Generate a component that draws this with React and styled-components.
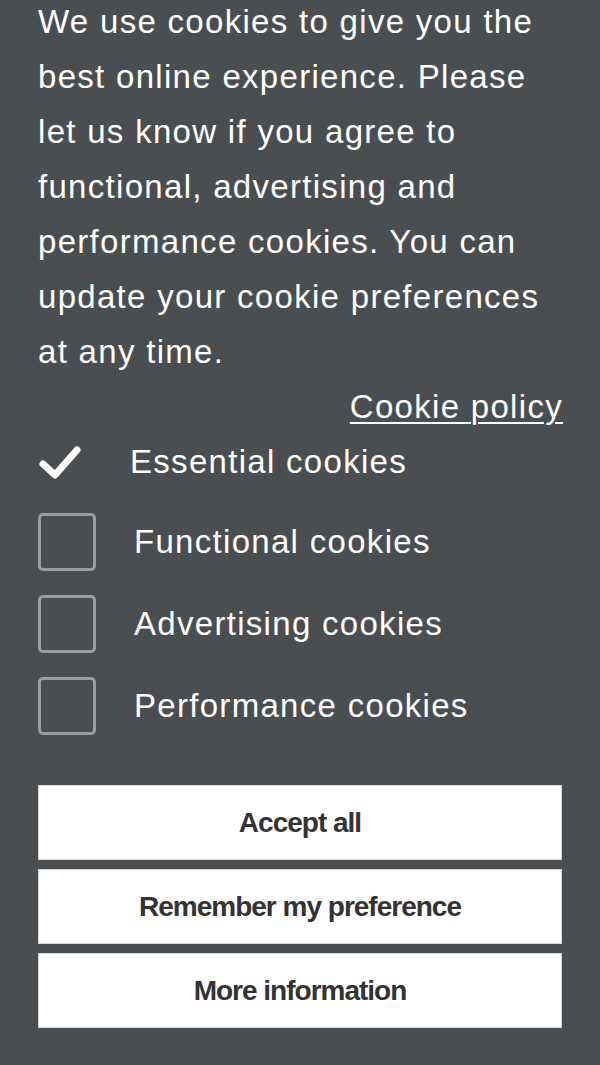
import React from 'react'
import styled, { createGlobalStyle } from 'styled-components'

const Global = createGlobalStyle`
  html, body {
    margin: 0;
    padding: 0;
    background: #4a4e51;
  }
  body {
    font-family: "Liberation Sans", Arial, sans-serif;
  }
`

const Banner = styled.div`
  background: #4a4e51;
  color: #fff;
  padding: 0 38px 38px;
  min-height: 1065px;
  box-sizing: border-box;
  overflow: hidden;
`

const Message = styled.p`
  margin: -6px 0 0;
  font-size: 33px;
  line-height: 55px;
  letter-spacing: 1.3px;
`

const PolicyRow = styled.div`
  display: flex;
  justify-content: flex-end;
`

const PolicyLink = styled.a`
  color: #fff;
  font-size: 33px;
  line-height: 55px;
  letter-spacing: 1.3px;
  margin-right: -1px;
  text-decoration: underline;
  text-underline-offset: 4px;
  text-decoration-thickness: 2px;
`

const Options = styled.ul`
  list-style: none;
  margin: 0;
  padding: 0;
  display: flex;
  flex-direction: column;
`

const Option = styled.li`
  display: flex;
  align-items: center;
  height: ${p => (p.$fixed ? '56px' : '82px')};
  margin-bottom: ${p => (p.$fixed ? '11px' : '0')};
  font-size: 33px;
  letter-spacing: 1.3px;
`

const CheckMark = styled.span`
  width: 92px;
  display: flex;
  align-items: center;
`

const Box = styled.span`
  width: 58px;
  height: 58px;
  box-sizing: border-box;
  border: 3px solid #9b9d9f;
  border-radius: 5px;
  margin-right: 38px;
  flex-shrink: 0;
`

const Buttons = styled.div`
  display: flex;
  flex-direction: column;
  gap: 9px;
  margin-top: 38px;
`

const Button = styled.button`
  height: 75px;
  background: #fff;
  border: 1px solid #d8d8d8;
  color: #333;
  font-family: "Liberation Sans", Arial, sans-serif;
  font-weight: 700;
  font-size: 28px;
  letter-spacing: -1px;
  cursor: pointer;
`

const optional = ['Functional cookies', 'Advertising cookies', 'Performance cookies']

export default function App() {
  return (
    <>
      <Global />
      <Banner>
        <Message>
          We use cookies to give you the best online experience. Please let us know if you
          agree to functional, advertising and performance cookies. You can update your
          cookie preferences at any time.
        </Message>
        <PolicyRow>
          <PolicyLink href="#">Cookie policy</PolicyLink>
        </PolicyRow>
        <Options>
          <Option $fixed>
            <CheckMark>
              <svg width="46" height="36" viewBox="0 0 46 36">
                <path d="M5 20 L17 31 L39 6" fill="none" stroke="#fff" strokeWidth="7" strokeLinecap="round" strokeLinejoin="round" />
              </svg>
            </CheckMark>
            Essential cookies
          </Option>
          {optional.map(label => (
            <Option key={label}>
              <Box />
              {label}
            </Option>
          ))}
        </Options>
        <Buttons>
          <Button>Accept all</Button>
          <Button>Remember my preference</Button>
          <Button>More information</Button>
        </Buttons>
      </Banner>
    </>
  )
}
